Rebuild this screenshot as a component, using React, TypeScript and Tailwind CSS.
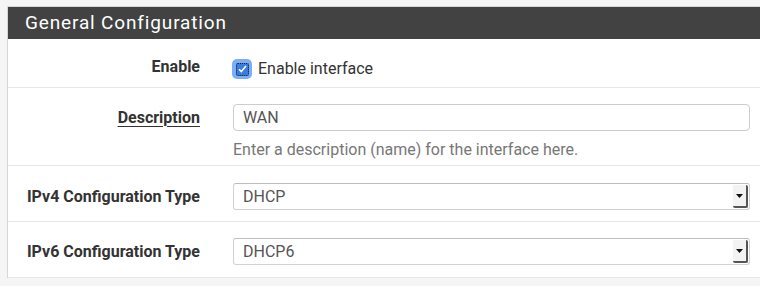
const font = { fontFamily: 'Roboto, "Liberation Sans", sans-serif' }

function Label({ text, underline }: { text: string; underline?: boolean }) {
  return (
    <div className="w-[192px] shrink-0 text-right text-[16px] font-bold text-[#333]">
      <span className={underline ? 'underline underline-offset-[3px] decoration-1' : ''}>{text}</span>
    </div>
  )
}

function Select({ value }: { value: string }) {
  return (
    <div className="flex h-[27px] w-[517px] items-stretch rounded-[3px] border border-[#d2d2d2] border-t-[#bdbdbd] bg-white">
      <div className="flex flex-1 items-center pl-[9px] text-[16px] text-[#555]">{value}</div>
      <div className="m-[1px] flex w-[15px] items-center justify-center rounded-[2px] border-r-2 border-b-2 border-[#555] bg-[#f3f3f3]">
        <svg width="7" height="4" viewBox="0 0 7 4">
          <path d="M0 0h7L3.5 4z" fill="#111" />
        </svg>
      </div>
    </div>
  )
}

export default function App() {
  return (
    <div style={font} className="h-[286px] w-[760px] overflow-hidden bg-[#f5f5f5] pl-[7px] pt-[6px]">
      <div className="border-l border-t border-[#d6d6d6] bg-white">
        <div className="flex h-[32px] items-center bg-[#424242] pl-[17px] pt-[1px] text-[19px] tracking-[0.85px] text-white">
          General Configuration
        </div>

        {/* Enable */}
        <div className="flex h-[49px] items-start border-b border-[#e6e6e6] pt-[18px]">
          <div className="flex h-[20px] items-center">
            <Label text="Enable" />
          </div>
          <div className="flex items-center pl-[32px]">
            <div className="flex h-[20px] w-[20px] items-center justify-center rounded-[5px] bg-[#7aaef7]">
              <div className="flex h-[13px] w-[13px] items-center justify-center rounded-[2px] border border-dotted border-[#1a1a1a] bg-[#3a7be0]">
                <svg width="9" height="8" viewBox="0 0 9 8">
                  <path d="M1 4.2l2.3 2.4L8 1" stroke="white" strokeWidth="1.6" fill="none" />
                </svg>
              </div>
            </div>
            <span className="ml-[6px] text-[16px] text-[#333]">Enable interface</span>
          </div>
        </div>

        {/* Description */}
        <div className="flex h-[78px] items-start border-b border-[#e6e6e6] pt-[16px]">
          <div className="flex h-[27px] items-center">
            <Label text="Description" underline />
          </div>
          <div className="pl-[33px]">
            <div className="flex h-[27px] w-[517px] items-center rounded-[4px] border border-[#cccccc] pl-[9px] text-[16px] text-[#555]">
              WAN
            </div>
            <div className="mt-[7px] text-[16px] text-[#777]">Enter a description (name) for the interface here.</div>
          </div>
        </div>

        {/* IPv4 */}
        <div className="flex h-[56px] items-start border-b border-[#e6e6e6] pt-[17px]">
          <div className="flex h-[27px] items-center">
            <Label text="IPv4 Configuration Type" />
          </div>
          <div className="pl-[33px]">
            <Select value="DHCP" />
          </div>
        </div>

        {/* IPv6 */}
        <div className="flex h-[56px] items-start border-b border-[#e6e6e6] pt-[16px]">
          <div className="flex h-[27px] items-center">
            <Label text="IPv6 Configuration Type" />
          </div>
          <div className="pl-[33px]">
            <Select value="DHCP6" />
          </div>
        </div>
      </div>
    </div>
  )
}
